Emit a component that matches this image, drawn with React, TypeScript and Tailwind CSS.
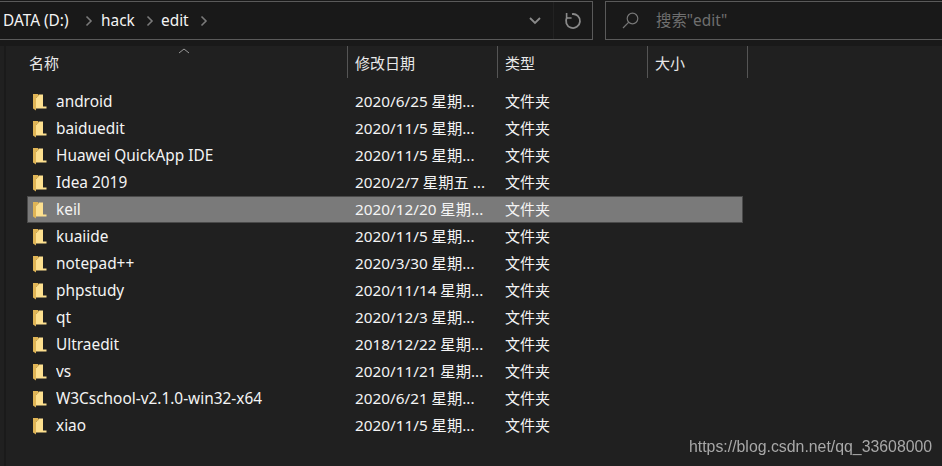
const rows: [string, string][] = [
  ["android", "2020/6/25 星期..."],
  ["baiduedit", "2020/11/5 星期..."],
  ["Huawei QuickApp IDE", "2020/11/5 星期..."],
  ["Idea 2019", "2020/2/7 星期五 ..."],
  ["keil", "2020/12/20 星期..."],
  ["kuaiide", "2020/11/5 星期..."],
  ["notepad++", "2020/3/30 星期..."],
  ["phpstudy", "2020/11/14 星期..."],
  ["qt", "2020/12/3 星期..."],
  ["Ultraedit", "2018/12/22 星期..."],
  ["vs", "2020/11/21 星期..."],
  ["W3Cschool-v2.1.0-win32-x64", "2020/6/21 星期..."],
  ["xiao", "2020/11/5 星期..."],
];

function Folder() {
  return (
    <svg width="15" height="18" viewBox="0 0 15 18" className="shrink-0">
      <path d="M1 1 L6 1 L7 2.5 L7 3 L4 5 L4 17.5 L1 15.5 Z" fill="#e0b556" />
      <path d="M4 5 L7 2.5 L7 1.5 L11 1.5 L11 13.5 L14.5 13.5 L14.5 15.5 L4 15.5 Z" fill="#fde08f" />
    </svg>
  );
}

function Chevron() {
  return (
    <svg width="8" height="12" viewBox="0 0 8 12" className="shrink-0">
      <path d="M1.5 1.5 L6 6 L1.5 10.5" fill="none" stroke="#7a7a7a" strokeWidth="1.6" />
    </svg>
  );
}

export default function App() {
  return (
    <div className="w-[942px] h-[466px] overflow-hidden bg-[#202020] text-[#f4f4f4] text-[15.4px] leading-[27px] font-['Noto_Sans','Noto_Sans_CJK_SC',sans-serif]">
      <div className="h-[46px] bg-[#191919] pt-px flex gap-[12px]">
        <div className="w-[593px] h-[39px] border-y border-r border-[#5a5a5a] flex items-center">
          <span className="ml-[3px] w-[70px]">DATA (D:)</span>
          <span className="ml-[12px]"><Chevron /></span>
          <span className="ml-[8px] w-[33px]">hack</span>
          <span className="ml-[12px]"><Chevron /></span>
          <span className="ml-[7px] w-[29px]">edit</span>
          <span className="ml-[10px]"><Chevron /></span>
          <div className="flex-1" />
          <svg width="14" height="10" viewBox="0 0 14 10" className="mr-[11px]">
            <path d="M2 2 L7 7 L12 2" fill="none" stroke="#8a8a8a" strokeWidth="1.8" />
          </svg>
          <div className="w-[39px] h-full border-l border-[#222] flex items-center justify-center">
            <svg width="18" height="18" viewBox="0 0 18 18">
              <path d="M8 2.1 A7 7 0 1 1 3 5.4" fill="none" stroke="#8a8a8a" strokeWidth="1.8" />
              <path d="M2.6 1 L2.6 6 L7.6 6" fill="none" stroke="#8a8a8a" strokeWidth="1.6" />
            </svg>
          </div>
        </div>
        <div className="flex-1 h-[39px] border-y border-l border-[#5a5a5a] flex items-center text-[#6f6f6f]">
          <svg width="17" height="17" viewBox="0 0 17 17" className="ml-[16px]">
            <circle cx="10.5" cy="6.5" r="5.3" fill="none" stroke="#777" strokeWidth="1.2" />
            <path d="M6.8 10.2 L1 16" stroke="#777" strokeWidth="1.2" />
          </svg>
          <span className="ml-[17px]">搜索"edit"</span>
        </div>
      </div>

      <div className="ml-[4px] border-l-2 border-[#1a1a1a] h-[420px] relative">
        <svg width="12" height="6" viewBox="0 0 12 6" className="absolute left-[172px] top-[2px]">
          <path d="M1 5 L6 1 L11 5" fill="none" stroke="#9a9a9a" strokeWidth="1" />
        </svg>
        <div className="flex h-[32px] text-[15px] text-[#e8e8e8] leading-[34px]">
          <div className="w-[342px] border-r border-[#555] pl-[23px]">名称</div>
          <div className="w-[150px] border-r border-[#555] pl-[7px]">修改日期</div>
          <div className="w-[150px] border-r border-[#555] pl-[7px]">类型</div>
          <div className="w-[100px] border-r border-[#555] pl-[7px]">大小</div>
        </div>
        <div className="mt-[10px] ml-[21px] w-[716px]">
          {rows.map(([name, date]) => {
            const selected = name === "keil";
            return (
              <div
                key={name}
                className={`flex items-center h-[27px] ${selected ? "bg-[#7a7a7a] outline outline-1 -outline-offset-1 outline-[#4a4a4a]" : ""}`}
              >
                <div className="w-[29px] pl-[5px] flex"><Folder /></div>
                <div className="w-[299px] truncate">{name}</div>
                <div className="w-[150px] text-[15.3px]">{date}</div>
                <div className="text-[15px]">文件夹</div>
              </div>
            );
          })}
        </div>
      </div>

      <div className="fixed left-[689px] top-[437px] text-[15.85px] leading-[20px] text-[#a8a8a8] font-['Liberation_Sans',sans-serif]">
        https://blog.csdn.net/qq_33608000
      </div>
    </div>
  );
}
